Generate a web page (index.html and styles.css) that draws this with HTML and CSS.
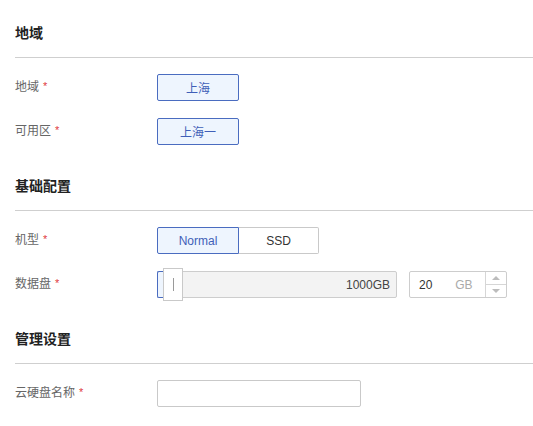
FILE: index.html
```html
<!DOCTYPE html>
<html lang="zh">
<head>
<meta charset="utf-8">
<link rel="stylesheet" href="styles.css">
</head>
<body>
<div class="page">
  <section class="section">
    <div class="section-head"><h2 class="section-title">地域</h2></div>
    <div class="section-body">
      <div class="row">
        <div class="label">地域<span class="req">*</span></div>
        <div class="control"><button class="opt active">上海</button></div>
      </div>
      <div class="row">
        <div class="label">可用区<span class="req">*</span></div>
        <div class="control"><button class="opt active">上海一</button></div>
      </div>
    </div>
  </section>
  <section class="section">
    <div class="section-head"><h2 class="section-title">基础配置</h2></div>
    <div class="section-body">
      <div class="row">
        <div class="label">机型<span class="req">*</span></div>
        <div class="control">
          <div class="seg">
            <button class="opt active">Normal</button>
            <button class="opt seg-right">SSD</button>
          </div>
        </div>
      </div>
      <div class="row">
        <div class="label">数据盘<span class="req">*</span></div>
        <div class="control">
          <div class="slider">
            <div class="slider-fill"></div>
            <div class="slider-handle"><span class="grip"></span></div>
            <span class="slider-max">1000GB</span>
          </div>
          <div class="num">
            <span class="num-val">20</span>
            <span class="num-unit">GB</span>
            <div class="spin">
              <span class="spin-btn"><span class="tri up"></span></span>
              <span class="spin-btn"><span class="tri down"></span></span>
            </div>
          </div>
        </div>
      </div>
    </div>
  </section>
  <section class="section">
    <div class="section-head"><h2 class="section-title">管理设置</h2></div>
    <div class="section-body">
      <div class="row">
        <div class="label">云硬盘名称<span class="req">*</span></div>
        <div class="control"><div class="text-input"></div></div>
      </div>
    </div>
  </section>
</div>
</body>
</html>
```
FILE: styles.css
```css
* { box-sizing: border-box; }
html, body { margin: 0; padding: 0; background: #fff; }
body {
  font-family: "Liberation Sans", "Noto Sans CJK SC", sans-serif;
  font-size: 12px;
  color: #333;
}
.page { padding-left: 15px; }
.section-head {
  padding: 23px 0 14px;
  border-bottom: 1px solid #cfcfcf;
}
.section-title {
  margin: 0;
  font-size: 14px;
  line-height: 20px;
  font-weight: 600;
  color: #222;
}
.section-body {
  padding: 16px 0 8px;
  display: flex;
  flex-direction: column;
  gap: 17px;
}
.row { display: flex; align-items: center; height: 27px; }
.label {
  width: 142px;
  color: #666;
  font-size: 12px;
  line-height: 27px;
}
.req { color: #e0393e; margin-left: 4px; font-size: 11px; position: relative; top: -1px; }
.control { display: flex; align-items: center; gap: 12px; }
.opt {
  width: 82px;
  height: 27px;
  padding: 0;
  border: 1px solid #c9c9c9;
  background: #fff;
  border-radius: 2px;
  font-family: inherit;
  font-size: 12px;
  color: #333;
}
.opt.active {
  border-color: #4a6cc0;
  background: #eef5fe;
  color: #3f5fb8;
}
.seg { display: flex; }
.seg .opt.active { border-radius: 2px 0 0 2px; }
.seg .seg-right { width: 80px; border-left: none; border-radius: 0 2px 2px 0; }
.slider {
  position: relative;
  width: 240px;
  height: 27px;
  border: 1px solid #cdcdcd;
  background: #f3f3f3;
  border-radius: 2px;
  display: flex;
  align-items: center;
  justify-content: flex-end;
  padding-right: 6px;
}
.slider-fill {
  position: absolute;
  left: -1px; top: -1px; bottom: -1px;
  width: 12px;
  border: 1px solid #4a6cc0;
  border-right: none;
  background: #eef5fe;
  border-radius: 2px 0 0 2px;
}
.slider-handle {
  position: absolute;
  left: 5px; top: -4px;
  width: 20px; height: 33px;
  background: #fff;
  border: 1px solid #c9c9c9;
  display: flex; align-items: center; justify-content: center;
}
.grip { width: 1px; height: 13px; background: #9a9a9a; }
.slider-max { font-size: 12px; color: #444; }
.num {
  width: 98px;
  height: 27px;
  border: 1px solid #cdcdcd;
  border-radius: 2px;
  display: flex;
  align-items: center;
  padding-left: 9px;
}
.num-val { width: 40px; color: #333; }
.num-unit { width: 33px; color: #aaa; }
.spin {
  margin-left: auto;
  width: 23px;
  height: 100%;
  border-left: 1px solid #d6d6d6;
  display: flex;
  flex-direction: column;
}
.spin-btn { flex: 1; display: flex; align-items: center; justify-content: center; }
.spin-btn + .spin-btn { border-top: 1px solid #d6d6d6; }
.tri { width: 0; height: 0; border-left: 4px solid transparent; border-right: 4px solid transparent; }
.tri.up { border-bottom: 4px solid #bcbcbc; }
.tri.down { border-top: 4px solid #bcbcbc; }
.text-input {
  width: 204px;
  height: 27px;
  border: 1px solid #c9c9c9;
  border-radius: 2px;
  background: #fff;
}
```
